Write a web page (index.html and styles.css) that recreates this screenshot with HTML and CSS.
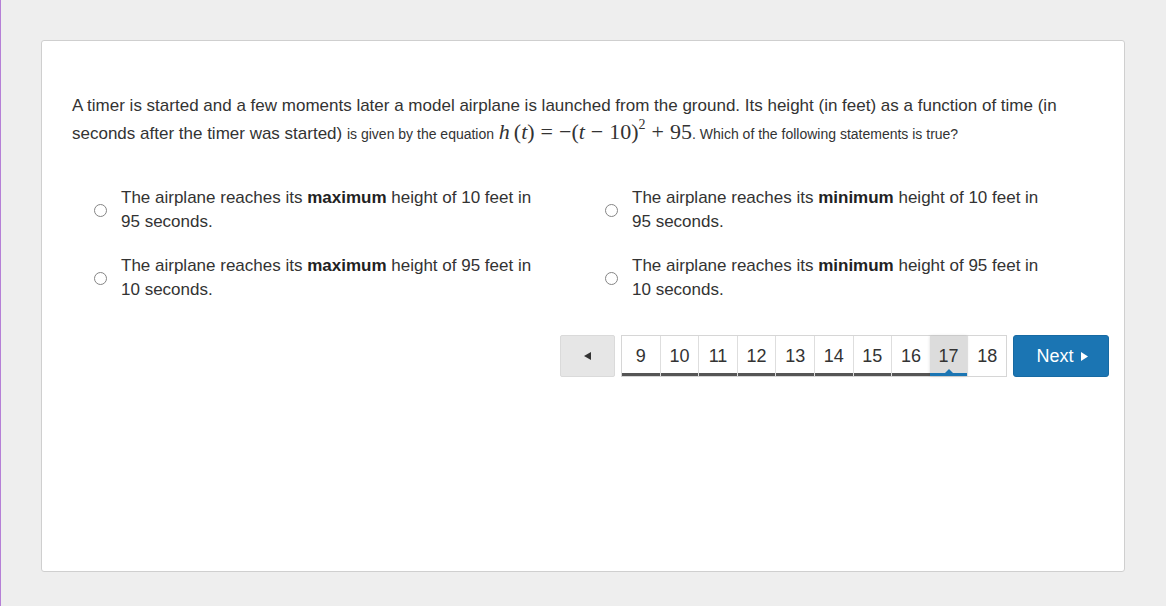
FILE: index.html
```html
<!DOCTYPE html>
<html>
<head>
<meta charset="utf-8">
<link rel="stylesheet" href="styles.css">
</head>
<body>
<div class="card">
  <p class="question">A timer is started and a few moments later a model airplane is launched from the ground. Its height (in feet) as a function of time (in seconds after the timer was started) <span class="small">is given by the equation</span> <span class="math"><i>h</i><span class="sp"></span>(<i>t</i>)<span class="op">=</span>−(<i>t</i><span class="op">−</span>10)<sup>2</sup><span class="op">+</span>95</span><span class="small">. Which of the following statements is true?</span></p>
  <div class="options">
    <label class="option"><span class="radio"></span><span class="text">The airplane reaches its <b>maximum</b> height of 10 feet in 95 seconds.</span></label>
    <label class="option"><span class="radio"></span><span class="text">The airplane reaches its <b>minimum</b> height of 10 feet in 95 seconds.</span></label>
    <label class="option"><span class="radio"></span><span class="text">The airplane reaches its <b>maximum</b> height of 95 feet in 10 seconds.</span></label>
    <label class="option"><span class="radio"></span><span class="text">The airplane reaches its <b>minimum</b> height of 95 feet in 10 seconds.</span></label>
  </div>
  <div class="pager">
    <button class="prev"><svg width="7" height="8" viewBox="0 0 7 8"><polygon points="7,0 7,8 0,4" fill="#333"/></svg></button>
    <div class="pages">
      <span class="pg done">9</span>
      <span class="pg done">10</span>
      <span class="pg done">11</span>
      <span class="pg done">12</span>
      <span class="pg done">13</span>
      <span class="pg done">14</span>
      <span class="pg done">15</span>
      <span class="pg done">16</span>
      <span class="pg current">17</span>
      <span class="pg">18</span>
    </div>
    <button class="next">Next <svg width="7" height="9" viewBox="0 0 7 9"><polygon points="0,0 7,4.5 0,9" fill="#fff"/></svg></button>
  </div>
</div>
</body>
</html>
```
FILE: styles.css
```css
html { background: #eeeeee; }
body {
  margin: 0;
  min-height: 606px;
  border-left: 1px solid #b57fd6;
  font-family: "Liberation Sans", Arial, sans-serif;
  color: #333;
  padding: 40px 0 0 40px;
  box-sizing: border-box;
}
.card {
  width: 1084px;
  height: 532px;
  box-sizing: border-box;
  background: #fff;
  border: 1px solid #cfcfcf;
  border-radius: 3px;
  padding: 51px 15px 0 30px;
}
.question {
  margin: 0;
  font-size: 17px;
  line-height: 28px;
}
.small { font-size: 14px; }
.math {
  font-family: "Liberation Serif", "Times New Roman", serif;
  font-size: 22px;
  line-height: 20px;
}
.math i { font-style: italic; }
.math .sp { display: inline-block; width: 4px; }
.math .op { padding: 0 6px; }
.math sup { font-size: 14px; line-height: 0; vertical-align: 10px; }
.options {
  display: grid;
  grid-template-columns: 511px 511px;
  row-gap: 20px;
  margin-top: 38px;
}
.option {
  display: flex;
  align-items: center;
  padding-left: 22px;
  font-size: 17px;
  line-height: 24px;
}
.radio {
  width: 11px;
  height: 11px;
  border: 1px solid #858585;
  border-radius: 50%;
  margin-right: 14px;
  flex: none;
}
.text { width: 425px; }
.text b { font-weight: bold; color: #222; }
.pager {
  display: flex;
  justify-content: flex-end;
  gap: 6px;
  margin-top: 33px;
}
.prev {
  width: 55px;
  height: 42px;
  background: #e6e6e6;
  border: 1px solid #dadada;
  border-radius: 2px;
  display: flex;
  align-items: center;
  justify-content: center;
  padding: 0;
}
.pages {
  display: flex;
  width: 386px;
  height: 42px;
  box-sizing: border-box;
  border: 1px solid #d6d6d6;
  background: #fff;
}
.pg {
  flex: 1;
  display: flex;
  align-items: center;
  justify-content: center;
  font-size: 18px;
  color: #333;
  border-left: 1px solid #dedede;
  position: relative;
}
.pg:first-child { border-left: none; }
.pg.done { box-shadow: inset 0 -3px 0 #555; }
.pg.current {
  background: #dcdcdc;
  box-shadow: inset 0 -3px 0 #1b75b3, 0 0 3px rgba(0,0,0,0.15);
  border-left: none;
}
.pg.current::after {
  content: "";
  position: absolute;
  left: 50%;
  bottom: 3px;
  margin-left: -4px;
  border-left: 4px solid transparent;
  border-right: 4px solid transparent;
  border-bottom: 4px solid #1b75b3;
}
.next {
  width: 96px;
  height: 42px;
  background: #1b75b3;
  border: 1px solid #176aa3;
  border-radius: 3px;
  color: #fff;
  font-family: "Liberation Sans", Arial, sans-serif;
  font-size: 18px;
  display: flex;
  align-items: center;
  justify-content: center;
  gap: 7px;
  padding: 0 0 0 2px;
}
```
